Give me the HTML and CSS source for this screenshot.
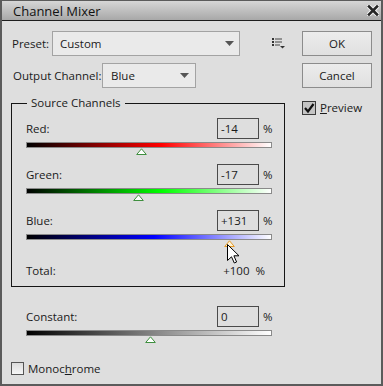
FILE: index.html
```html
<!DOCTYPE html>
<html lang="en">
<head>
    <meta charset="UTF-8">
    <title>Channel Mixer</title>
    <link rel="stylesheet" href="styles.css">
</head>
<body>
<div class="window">
    <div class="titlebar">
        <span class="title">Channel Mixer</span>
        <svg class="close" width="12" height="11" viewBox="0 0 12 11">
            <path d="M2 1.5 L10 9.5 M10 1.5 L2 9.5" stroke="#f4f4f4" stroke-width="4.6" stroke-linecap="square"/>
            <path d="M2 1.5 L10 9.5 M10 1.5 L2 9.5" stroke="#262626" stroke-width="2.6" stroke-linecap="square"/>
        </svg>
    </div>
    <div class="body">
        <div class="main">
            <div class="row">
                <span class="label preset-label">Preset:</span>
                <div class="select preset">
                    <span>Custom</span>
                    <svg width="9" height="5" viewBox="0 0 9 5"><path d="M0 0 H9 L4.5 5 Z" fill="#555"/></svg>
                </div>
                <svg class="list-icon" width="13" height="11" viewBox="0 0 13 11">
                    <rect x="0" y="0" width="2" height="2" fill="#333"/>
                    <rect x="3" y="0.5" width="7" height="1" fill="#444"/>
                    <rect x="0" y="3" width="2" height="2" fill="#333"/>
                    <rect x="3" y="3.5" width="7" height="1" fill="#444"/>
                    <rect x="0" y="6" width="2" height="2" fill="#333"/>
                    <rect x="3" y="6.5" width="5" height="1" fill="#444"/>
                    <path d="M8 8 H13 L10.5 10.5 Z" fill="#333"/>
                </svg>
            </div>
            <div class="row output-row">
                <span class="label output-label">Output Channel:</span>
                <div class="select output">
                    <span>Blue</span>
                    <svg width="9" height="5" viewBox="0 0 9 5"><path d="M0 0 H9 L4.5 5 Z" fill="#555"/></svg>
                </div>
            </div>
            <fieldset class="source">
                <legend>Source Channels</legend>
                <div class="channel">
                    <div class="channel-head"><span class="name">Red:</span><span class="value">-14</span><span class="pct">%</span></div>
                    <div class="bar red"></div>
                    <div class="track"><svg class="thumb" style="margin-left: 110px" width="11" height="7" viewBox="0 0 11 7"><path d="M5.5 0.8 L10.3 6.5 H0.7 Z" fill="#fff" stroke="#3f8f3f"/></svg></div>
                </div>
                <div class="channel">
                    <div class="channel-head"><span class="name">Green:</span><span class="value">-17</span><span class="pct">%</span></div>
                    <div class="bar green"></div>
                    <div class="track"><svg class="thumb" style="margin-left: 107px" width="11" height="7" viewBox="0 0 11 7"><path d="M5.5 0.8 L10.3 6.5 H0.7 Z" fill="#fff" stroke="#3f8f3f"/></svg></div>
                </div>
                <div class="channel">
                    <div class="channel-head"><span class="name">Blue:</span><span class="value">+131</span><span class="pct">%</span></div>
                    <div class="bar blue"></div>
                    <div class="track"><svg class="thumb" style="margin-left: 198px" width="11" height="7" viewBox="0 0 11 7"><path d="M5.5 0.8 L10.3 6.5 H0.7 Z" fill="#fff4d8" stroke="#e49a2a"/></svg></div>
                </div>
                <div class="total">
                    <span>Total:</span>
                    <span class="total-value">+100&nbsp; %</span>
                </div>
            </fieldset>
            <div class="channel constant">
                <div class="channel-head"><span class="name">Constant:</span><span class="value">0</span><span class="pct">%</span></div>
                <div class="bar gray"></div>
                <div class="track"><svg class="thumb" style="margin-left: 119px" width="11" height="7" viewBox="0 0 11 7"><path d="M5.5 0.8 L10.3 6.5 H0.7 Z" fill="#fff" stroke="#3f8f3f"/></svg></div>
            </div>
            <label class="check mono"><span class="box"></span>Monoc<u>h</u>rome</label>
        </div>
        <div class="side">
            <button>OK</button>
            <button class="cancel">Cancel</button>
            <label class="check preview">
                <span class="box checked">
                    <svg width="12" height="12" viewBox="0 0 12 12"><path d="M2 6 L5 9.5 L10.5 2" fill="none" stroke="#111" stroke-width="2.2"/></svg>
                </span><u>P</u>review
            </label>
        </div>
    </div>
    <svg class="cursor" width="13" height="20" viewBox="0 0 13 20">
        <path d="M0.5 0.5 V16.5 L4.5 12.8 L7.3 19 L9.6 18 L6.9 11.8 H12 Z" fill="#fff" stroke="#000" stroke-linejoin="round"/>
    </svg>
</div>
</body>
</html>
```

FILE: styles.css
```css
* {
    box-sizing: border-box;
}
body {
    margin: 0;
    font-family: "Open Sans", "Noto Sans", sans-serif;
    font-size: 11.5px;
    color: #1a1a1a;
    background: #dedede;
}
.window {
    position: relative;
    width: 383px;
    height: 386px;
    border: 2px solid #5b5b5b;
    border-top-width: 1px;
    background: #dedede;
    overflow: hidden;
}
.titlebar {
    display: flex;
    align-items: center;
    justify-content: space-between;
    height: 20px;
    padding: 0 2px 0 11px;
    border-bottom: 1px solid #1e1e1e;
    background: linear-gradient(#d6d6d6, #a8a8a8);
}
.title {
    font-size: 13px;
    color: #111;
}
.body {
    display: flex;
    padding: 10px 0 0 9px;
}
.main {
    width: 274px;
}
.side {
    display: flex;
    flex-direction: column;
    width: 70px;
    margin-left: 17px;
}
.row {
    display: flex;
    align-items: center;
    height: 25px;
}
.output-row {
    margin-top: 7px;
}
.label {
    padding-left: 1px;
}
.preset-label {
    width: 41px;
}
.output-label {
    width: 91px;
    padding-left: 2px;
}
.select {
    display: flex;
    align-items: center;
    justify-content: space-between;
    height: 25px;
    border: 1px solid #a3a3a3;
    background: #eaeaea;
}
.preset {
    width: 188px;
    padding: 0 5px 0 7px;
}
.output {
    width: 94px;
    padding: 0 6px 0 8px;
}
.list-icon {
    margin-left: 32px;
}
.source {
    margin: 7px 0 0;
    padding: 7px 12px 8px 14px;
    border: 1px solid #151515;
}
.source legend {
    padding: 0 4px;
    margin-left: 1px;
    line-height: 16px;
}
.channel {
    margin-bottom: 9px;
}
.channel-head {
    display: flex;
    align-items: center;
    height: 21px;
}
.channel-head .name {
    flex: 1;
}
.channel-head .value {
    width: 42px;
    height: 21px;
    padding-left: 3px;
    line-height: 19px;
    border: 1px solid #4a4a4a;
}
.channel-head .pct {
    width: 13px;
    padding-left: 4px;
}
.bar {
    height: 6px;
    margin-top: 3px;
    border: 1px solid #8a8a8a;
}
.bar.red {
    background: linear-gradient(to right, #000, #f00 55%, #fff);
}
.bar.green {
    background: linear-gradient(to right, #000, #0f0 55%, #fff);
}
.bar.blue {
    background: linear-gradient(to right, #000, #00f 52%, #fff);
}
.bar.gray {
    background: linear-gradient(to right, #000, #fff);
}
.track {
    display: flex;
    height: 7px;
}
.total {
    display: flex;
    justify-content: space-between;
    align-items: center;
    height: 16px;
    margin-top: 15px;
}
.total-value {
    padding-right: 7px;
}
.constant {
    margin: 19px 0 0;
    padding: 0 13px 0 15px;
}
.check {
    display: flex;
    align-items: center;
}
.check .box {
    display: flex;
    align-items: center;
    justify-content: center;
    width: 13px;
    height: 13px;
    margin-right: 4px;
    border: 1px solid #555;
    background: linear-gradient(#dcdcdc, #f6f6f6);
}
.check .box.checked {
    width: 14px;
    height: 14px;
    border-color: #3a3a3a;
    background: #c4c4c4;
}
.mono {
    margin-top: 18px;
}
.preview {
    margin-top: 12px;
}
button {
    height: 25px;
    border: 1px solid #8c8c8c;
    background: linear-gradient(#ececec, #e0e0e0);
    font-family: inherit;
    font-size: 11.5px;
    color: #1a1a1a;
    padding: 0;
}
.cancel {
    margin-top: 7px;
}
.cursor {
    position: absolute;
    left: 225px;
    top: 243px;
}
```
